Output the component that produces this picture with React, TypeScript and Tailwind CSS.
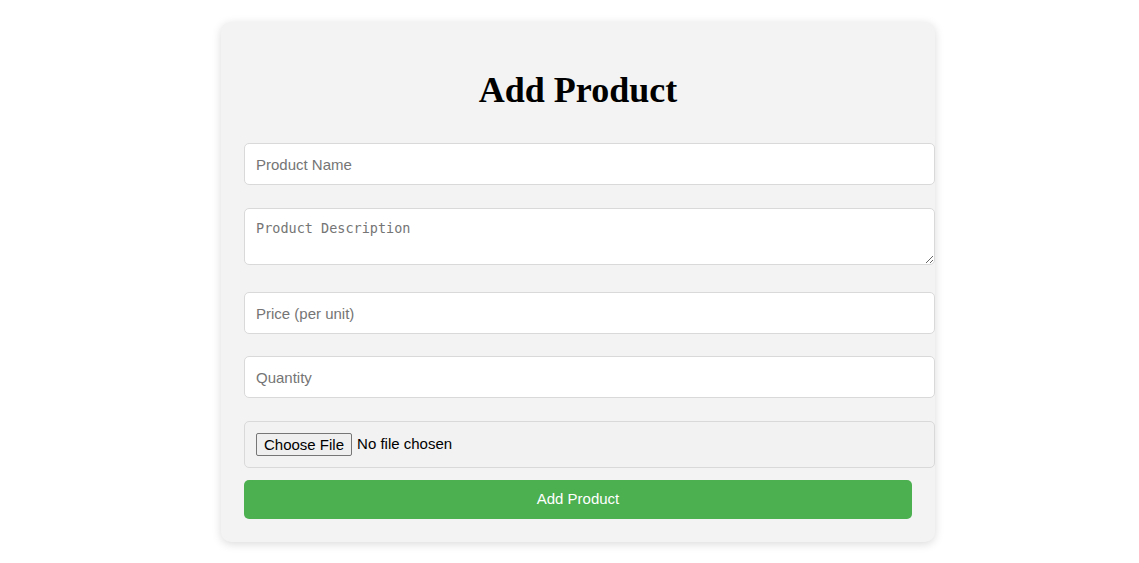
import React from "react";

export default function App() {
  const inputCls =
    "block w-[691px] h-[42px] px-[11px] bg-white border border-[#d9d9d9] rounded-[5px] text-[15px] text-black placeholder:text-[#757575] outline-none box-border";
  return (
    <div className="min-h-[563px] w-full bg-white pt-[22px] pl-[221px]" style={{ fontFamily: '"Liberation Sans", Arial, sans-serif' }}>
      <div className="w-[714px] h-[520px] bg-[#f3f3f3] rounded-[10px] shadow-[0_2px_10px_rgba(0,0,0,0.15)] px-[23px] pt-[48px]">
        <h2
          className="text-center text-[36px] font-bold text-black leading-[41px] mb-[32px]"
          style={{ fontFamily: '"Liberation Serif", "Times New Roman", serif' }}
        >
          Add Product
        </h2>
        <input type="text" placeholder="Product Name" className={inputCls} />
        <textarea
          placeholder="Product Description"
          className="block mt-[23px] w-[691px] h-[57px] px-[11px] pt-[11px] pb-[9px] bg-white border border-[#d9d9d9] rounded-[5px] text-[13.5px] leading-[17px] placeholder:text-[#757575] outline-none resize-y box-border"
          style={{ fontFamily: '"DejaVu Sans Mono", "Liberation Mono", monospace' }}
        />
        <input type="text" placeholder="Price (per unit)" className={inputCls + " mt-[27px]"} />
        <input type="text" placeholder="Quantity" className={inputCls + " mt-[22px]"} />
        <div className="mt-[23px] w-[691px] h-[47px] border border-[#d9d9d9] rounded-[5px] bg-[#f2f2f2] flex items-center pl-[11px] box-border">
          <span className="h-[23px] px-[7px] flex items-center border border-[#767676] rounded-[2px] bg-[#efefef] text-[15px] text-black leading-none">
            Choose File
          </span>
          <span className="ml-[5px] text-[15px] text-black">No file chosen</span>
        </div>
        <button className="mt-[12px] w-[668px] h-[39px] bg-[#4caf50] rounded-[5px] text-white text-[15px] flex items-center justify-center">
          Add Product
        </button>
      </div>
    </div>
  );
}
